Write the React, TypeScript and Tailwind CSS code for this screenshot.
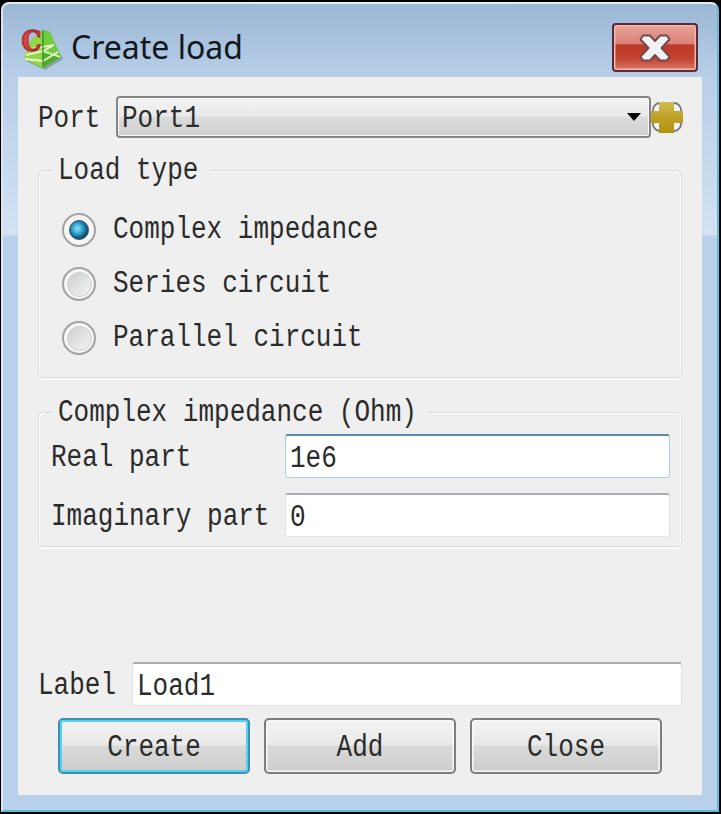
import { useState } from "react";
import clsx from "clsx";

const LOAD_TYPES = ["Complex impedance", "Series circuit", "Parallel circuit"];

interface TextProps {
  children: string;
  className?: string;
}

// tall narrow bitmap-like dialog font
function Text({ children, className }: TextProps) {
  return (
    <span
      className={clsx(
        "inline-block whitespace-pre font-['Liberation_Mono',monospace] text-[26px] leading-[30px] text-[#2b2b2b] scale-y-[1.2]",
        className
      )}
    >
      {children}
    </span>
  );
}

function AppIcon() {
  return (
    <svg width="42" height="46" viewBox="0 0 42 46">
      <path d="M25 6 L42 35 L24 46 L5 37 Z" fill="#4c7a4c" opacity=".45" />
      <path d="M21 6 L29 8 L40 33 L22 44 L3 35 Z" fill="#4fae2a" />
      <path d="M21 6 L22 44 L3 35 L8 18 Z" fill="#93d548" />
      <path d="M22 6 L29 8 L40 33 L22 29 Z" fill="#72cc3d" />
      <path d="M5 31 L22 27 L39 33 M10 25 L33 21 M4 35 L22 37 L37 28 M22 27 L33 21" fill="none" stroke="#e4f8c8" strokeWidth="1.8" />
      <path d="M22 7 V43" stroke="#2f9a24" strokeWidth="1.3" />
      <text
        x="0.5"
        y="26.5"
        fontFamily="'DejaVu Serif', serif"
        fontWeight="bold"
        fontSize="28"
        textLength="20"
        lengthAdjust="spacingAndGlyphs"
        fill="#df4145"
        stroke="#a82a30"
        strokeWidth="1.4"
      >
        C
      </text>
    </svg>
  );
}

function CloseIcon() {
  return (
    <svg width="32" height="28" viewBox="0 0 32 28">
      <path
        d="M4 1.5 H11 L16 7 L21 1.5 H28 L30.5 5.5 L22.5 14 L30.5 22.5 L28 26.5 H21 L16 21 L11 26.5 H4 L1.5 22.5 L9.5 14 L1.5 5.5 Z"
        fill="#f1f2f3"
        stroke="#75484d"
        strokeWidth="2"
        strokeLinejoin="round"
      />
    </svg>
  );
}

function PlusIcon() {
  return (
    <svg width="32" height="32" viewBox="0 0 32 32">
      <defs>
        <linearGradient id="gold" x1="0" y1="0" x2="0" y2="1">
          <stop offset="0" stopColor="#d2bb55" />
          <stop offset=".45" stopColor="#bfa328" />
          <stop offset="1" stopColor="#b29210" />
        </linearGradient>
      </defs>
      <rect x="2" y="2" width="28" height="28" rx="7" fill="#f4f4f4" stroke="#777" strokeWidth="1.8" />
      <path d="M8 1 H23 V10 H32 V22 H23 V32 H8 V22 H0 V10 H8 Z" fill="url(#gold)" />
    </svg>
  );
}

interface RadioProps {
  label: string;
  checked: boolean;
  onSelect: () => void;
}

function Radio({ label, checked, onSelect }: RadioProps) {
  return (
    <div role="radio" aria-checked={checked} onClick={onSelect} className="flex h-[54px] items-center gap-[17px]">
      <div className="flex size-[34px] items-center justify-center rounded-full border-2 border-[#a2a2a2] bg-[#f6f6f6]">
        {checked ? (
          <div className="size-[20px] rounded-full border border-[#315468] bg-[radial-gradient(circle_at_42%_42%,#8fe4fb_0%,#32a5d0_34%,#115075_66%,#173e58_100%)]" />
        ) : (
          <div className="size-[25px] rounded-full border border-[#cfcfcf] bg-linear-135 from-[#cbcdcf] to-[#f6f6f6]" />
        )}
      </div>
      <Text>{label}</Text>
    </div>
  );
}

interface GroupProps {
  title: string;
  className?: string;
  children: React.ReactNode;
}

function Group({ title, className, children }: GroupProps) {
  return (
    <div
      className={clsx(
        "flex flex-col rounded-[5px] border border-[#d6dada] shadow-[inset_1px_1px_#fff,inset_-1px_0_#fff,0_2px_#fcfcfc]",
        className
      )}
    >
      <div className="-mt-[15px] ml-[13px] flex h-[30px] self-start bg-[#efefef] pr-[11px] pl-[6px]">
        <Text>{title}</Text>
      </div>
      {children}
    </div>
  );
}

interface FieldProps {
  value: string;
  focused?: boolean;
  className?: string;
}

function Field({ value, focused, className }: FieldProps) {
  return (
    <div
      className={clsx(
        "flex items-center rounded-[3px] border bg-white pl-[4px] pt-[4px]",
        focused ? "border-[#b3cfe8] border-t-2 border-t-[#5e87b0]" : "border-[#dfe1e4] border-t-2 border-t-[#abadb3]",
        className
      )}
    >
      <Text>{value}</Text>
    </div>
  );
}

interface PushButtonProps {
  label: string;
  isDefault?: boolean;
}

function PushButton({ label, isDefault }: PushButtonProps) {
  return (
    <button
      className={clsx(
        "flex h-[56px] w-[192px] items-center justify-center rounded-[5px] border-2 bg-[linear-gradient(#f3f3f3_0%,#e9e9e9_48%,#dadada_50%,#cdcdcd_100%)] pt-[3px]",
        isDefault
          ? "border-[#3f8db0] shadow-[inset_0_0_0_2px_#55d0f2]"
          : "border-[#7d7d7d] shadow-[inset_0_0_0_1.5px_#f8f8f8]"
      )}
    >
      <Text>{label}</Text>
    </button>
  );
}

export default function App() {
  const [type, setType] = useState(0);

  return (
    <div className="h-[814px] w-[721px] overflow-hidden bg-black pt-[2px] pr-[2px] pb-[2px] pl-px">
      <div className="flex h-[810px] flex-col rounded-t-[8px] border-2 border-t-[#e3ecf4] border-r-[#62bcd9] border-b-[#55bfd8] border-l-[#dce6f3] bg-[linear-gradient(#9bb7d5_0px,#b8cfe8_73px,#d2e2f3_231px,#b8d0e9_232px)] px-[15px] pb-[15px]">
        <div className="flex h-[73px] shrink-0 items-start justify-between pr-[4px]">
          <div className="flex items-center gap-[8px] pt-[20px] pl-[3px]">
            <AppIcon />
            <span className="font-['Noto_Sans',sans-serif] text-[32px] leading-[46px] text-[#111820]">Create load</span>
          </div>
          <button className="mt-[19px] flex h-[49px] w-[86px] items-center justify-center rounded-[4px] border-2 border-[#5b2a3a] bg-[linear-gradient(#e9a399_0%,#db8076_42%,#bc3a27_44%,#c34430_75%,#d9796a_100%)] shadow-[inset_0_0_0_1.5px_#f0b5ad]">
            <CloseIcon />
          </button>
        </div>

        <div className="flex flex-1 flex-col bg-[#efefef] px-[20px] pt-[19px]">
          <div className="-mr-px flex h-[42px] items-center">
            <Text className="mt-[4px] w-[78px]">Port</Text>
            <div className="flex h-[42px] w-[535px] items-center justify-between rounded-[4px] border-2 border-[#858585] bg-[linear-gradient(#f3f3f3_0%,#e9e9e9_48%,#dcdcdc_50%,#cfcfcf_100%)] pr-[8px] pl-[4px] shadow-[inset_0_0_0_1px_#f8f8f8]">
              <Text className="mt-[3px]">Port1</Text>
              <svg width="14" height="8" viewBox="0 0 14 8">
                <path d="M0 0 H14 L7 8 Z" fill="#000" />
              </svg>
            </div>
            <PlusIcon />
          </div>

          <Group title="Load type" className="mt-[32px] h-[208px]">
            <div className="mt-[17px] pl-[23px]">
              {LOAD_TYPES.map((label, i) => (
                <Radio key={label} label={label} checked={type === i} onSelect={() => setType(i)} />
              ))}
            </div>
          </Group>

          <Group title="Complex impedance (Ohm)" className="mt-[34px] h-[135px]">
            <div className="mt-[6px] grid grid-cols-[234px_385px] gap-y-[15px] pl-[12px]">
              <Text className="mt-[3px] self-center">Real part</Text>
              <Field value="1e6" focused className="h-[44px]" />
              <Text className="mt-[3px] self-center">Imaginary part</Text>
              <Field value="0" className="h-[44px]" />
            </div>
          </Group>

          <div className="mt-[115px] flex items-center">
            <Text className="mt-[3px] w-[94px]">Label</Text>
            <Field value="Load1" className="h-[44px] flex-1" />
          </div>

          <div className="mt-[12px] flex gap-[14px] pl-[20px]">
            <PushButton label="Create" isDefault />
            <PushButton label="Add" />
            <PushButton label="Close" />
          </div>
        </div>
      </div>
    </div>
  );
}
